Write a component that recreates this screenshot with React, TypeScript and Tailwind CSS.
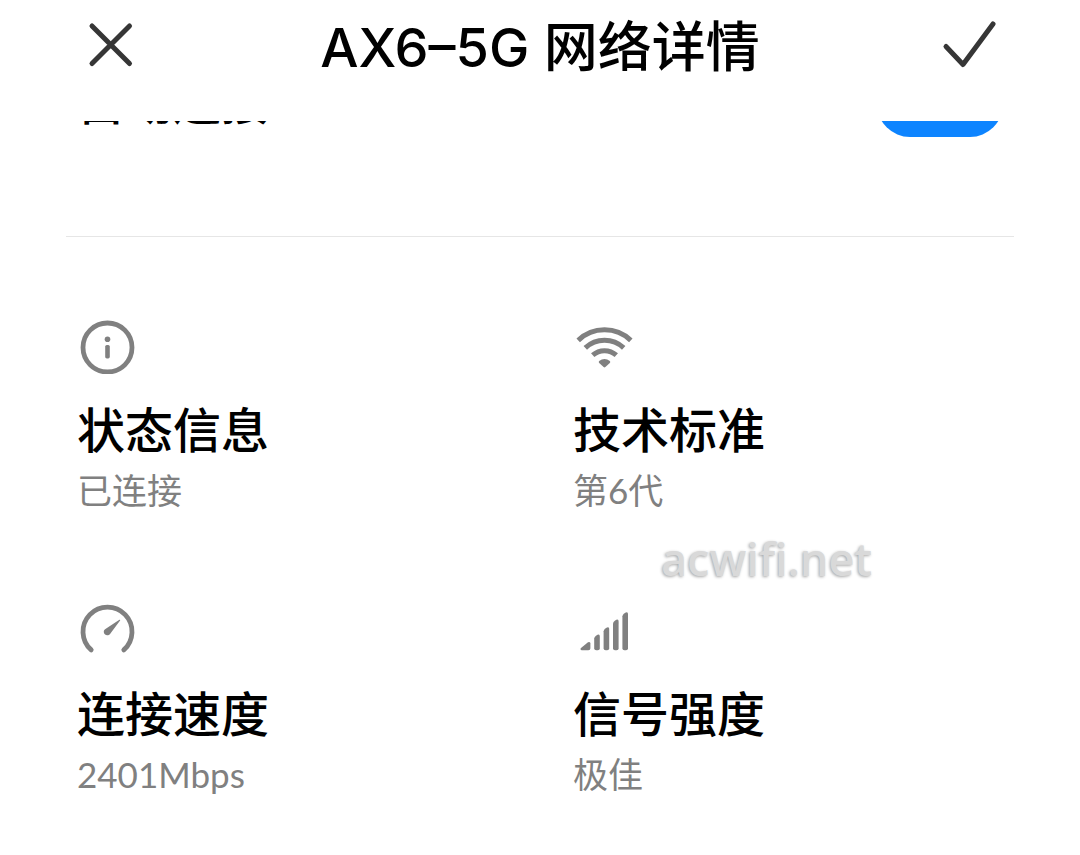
import type { ReactNode } from "react";

function InfoIcon() {
  return (
    <svg viewBox="-1 0 60 54" className="h-[54px] w-[60px] text-[#808080]" aria-hidden="true">
      <circle cx="29.5" cy="27.5" r="24.5" fill="none" stroke="currentColor" strokeWidth="4.8" />
      <circle cx="29.5" cy="19.2" r="2.8" fill="currentColor" />
      <rect x="27.2" y="25" width="4.6" height="13.4" rx="1.6" fill="currentColor" />
    </svg>
  );
}

function WifiIcon() {
  return (
    <svg viewBox="-1 0 60 54" className="h-[54px] w-[60px] text-[#808080]" aria-hidden="true">
      <g fill="none" stroke="currentColor" strokeWidth="5">
        <path d="M4.2 20.4A38 38 0 0 1 56.8 20.4" />
        <path d="M11.3 27.9A28 28 0 0 1 49.7 27.9" />
        <path d="M18.7 35.2A17.6 17.6 0 0 1 42.3 35.2" />
      </g>
      <path
        d="M25.2 41C28.4 38.3 32.6 38.3 35.8 41Q36.8 42 35.8 43L31.4 47Q30.5 47.8 29.6 47L25.2 43Q24.2 42 25.2 41Z"
        fill="currentColor"
      />
    </svg>
  );
}

function SpeedIcon() {
  return (
    <svg viewBox="-1 0 60 54" className="h-[54px] w-[60px] text-[#808080]" aria-hidden="true">
      <path
        d="M13.2 45.9A24.5 24.5 0 1 1 45.8 45.9"
        fill="none"
        stroke="currentColor"
        strokeWidth="4.8"
        strokeLinecap="round"
      />
      <path
        d="M41.4 15.7Q42.6 15.4 42.1 16.6L32.6 29.2C31.4 31.4 28.6 32 26.8 30.2C25 28.2 25.8 25.8 27.8 24.8Z"
        fill="currentColor"
      />
    </svg>
  );
}

function SignalIcon() {
  return (
    <svg viewBox="-1 0 60 54" className="h-[54px] w-[60px] text-[#808080]" aria-hidden="true">
      <g fill="currentColor">
        <path d="M7.6 46.2Q5.6 45.6 7 44L14 38.3Q16.4 37.2 16.4 39.6V44.2Q16.4 46.2 14.4 46.2Z" />
        <path d="M20.2 34.6Q20.4 33 22 31.8Q25.8 29 25.8 32.4V44.2Q25.8 46.2 23.8 46.2H22.2Q20.2 46.2 20.2 44.2Z" />
        <path d="M29.6 27.2Q29.8 25.6 31.4 24.4Q35.2 21.6 35.2 25V44.2Q35.2 46.2 33.2 46.2H31.6Q29.6 46.2 29.6 44.2Z" />
        <path d="M39 19.6Q39.2 18 40.8 16.8Q44.6 14 44.6 17.4V44.2Q44.6 46.2 42.6 46.2H41Q39 46.2 39 44.2Z" />
        <path d="M48.4 12.2Q48.6 10.6 50.2 9.4Q54 6.6 54 10V44.2Q54 46.2 52 46.2H50.4Q48.4 46.2 48.4 44.2Z" />
      </g>
    </svg>
  );
}

type Detail = { label: string; value: string; icon: ReactNode };

const details: Detail[] = [
  { label: "状态信息", value: "已连接", icon: <InfoIcon /> },
  { label: "技术标准", value: "第6代", icon: <WifiIcon /> },
  { label: "连接速度", value: "2401Mbps", icon: <SpeedIcon /> },
  { label: "信号强度", value: "极佳", icon: <SignalIcon /> },
];

export default function App() {
  return (
    <div className="relative min-h-screen bg-white pb-12 font-['Lato','Noto_Sans_CJK_SC',sans-serif] text-black">
      <header className="grid grid-cols-[66px_1fr_66px] items-center px-[78px] pt-2 pb-[33px]">
        <button type="button" aria-label="关闭" className="flex h-[72px] items-center justify-center">
          <svg viewBox="0 0 66 72" className="h-[72px] w-[66px]" aria-hidden="true">
            <path d="M14 14L51.5 51.5M51.5 14L14 51.5" stroke="#363636" strokeWidth="5" strokeLinecap="round" />
          </svg>
        </button>
        <h1 className="text-center font-['Inter','Noto_Sans_CJK_SC',sans-serif] text-[54px] leading-[80px] font-medium whitespace-nowrap">
          AX6–5G 网络详情
        </h1>
        <button type="button" aria-label="确定" className="flex h-[72px] items-center justify-center">
          <svg viewBox="0 0 66 72" className="h-[72px] w-[66px]" aria-hidden="true">
            <path
              d="M10 34.5L27 52.5L57 12"
              fill="none"
              stroke="#363636"
              strokeWidth="5"
              strokeLinecap="round"
              strokeLinejoin="round"
            />
          </svg>
        </button>
      </header>

      <main>
        {/* row scrolled mostly under the header */}
        <div className="flex h-4 items-end overflow-hidden px-[77px]">
          <label className="flex h-[66px] w-full shrink-0 items-center justify-between text-[48px] leading-[56px] font-medium">
            <span className="pb-1">自动连接</span>
            <input
              type="checkbox"
              defaultChecked
              className="h-[66px] w-[126px] appearance-none rounded-full bg-gray-200 checked:bg-[#0d84ff]"
            />
          </label>
        </div>

        <hr className="mx-[66px] mt-[99px] border-[#e6e6e6]" />

        <dl className="mt-[83px] grid grid-cols-2 gap-x-[66px] gap-y-[90px] px-[77px]">
          {details.map((item) => (
            <div key={item.label}>
              <dt>
                {item.icon}
                <span className="mt-7 block text-[48px] leading-[56px] font-medium">{item.label}</span>
              </dt>
              <dd className="mt-2 text-[35px] leading-[48px] text-[#808080]">{item.value}</dd>
            </div>
          ))}
        </dl>
      </main>

      <div className="pointer-events-none absolute top-[529px] left-[661px] font-['Open_Sans',sans-serif] text-[45px] leading-[60px] font-semibold text-[#d9d9d9] [text-shadow:-1px_1px_3px_#a8a8a8]">
        acwifi.net
      </div>
    </div>
  );
}
